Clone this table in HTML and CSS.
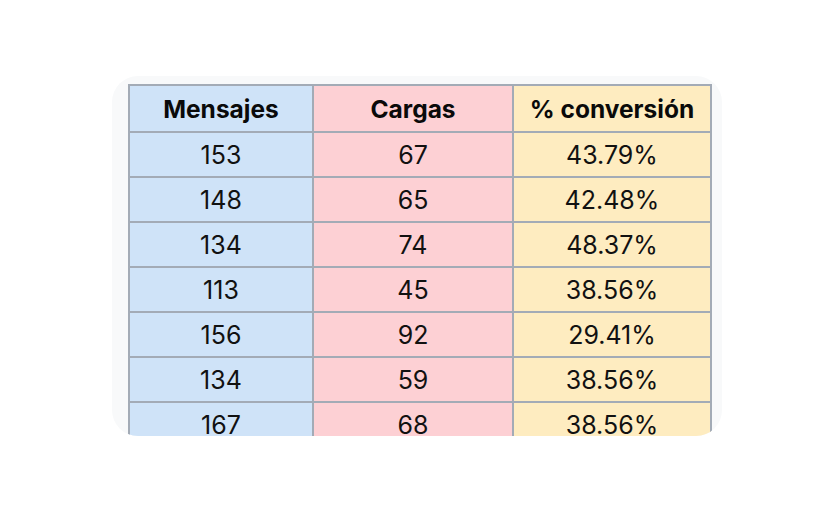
FILE: index.html
```html
<!DOCTYPE html>
<html lang="es">
<head>
<meta charset="utf-8">
<link rel="stylesheet" href="styles.css">
</head>
<body>
<div class="card">
  <table class="data">
    <colgroup>
      <col class="c1"><col class="c2"><col class="c3">
    </colgroup>
    <thead>
      <tr><th class="blue">Mensajes</th><th class="pink">Cargas</th><th class="yellow">% conversión</th></tr>
    </thead>
    <tbody>
      <tr><td class="blue">153</td><td class="pink">67</td><td class="yellow">43.79%</td></tr>
      <tr><td class="blue">148</td><td class="pink">65</td><td class="yellow">42.48%</td></tr>
      <tr><td class="blue">134</td><td class="pink">74</td><td class="yellow">48.37%</td></tr>
      <tr><td class="blue">113</td><td class="pink">45</td><td class="yellow">38.56%</td></tr>
      <tr><td class="blue">156</td><td class="pink">92</td><td class="yellow">29.41%</td></tr>
      <tr><td class="blue">134</td><td class="pink">59</td><td class="yellow">38.56%</td></tr>
      <tr><td class="blue">167</td><td class="pink">68</td><td class="yellow">38.56%</td></tr>
    </tbody>
  </table>
</div>
</body>
</html>
```
FILE: styles.css
```css
html, body {
  margin: 0;
  padding: 0;
  background: #ffffff;
}
body {
  font-family: "Inter", "Liberation Sans", sans-serif;
  color: #111111;
}
.card {
  margin: 76px 0 0 112px;
  width: 610px;
  height: 360px;
  box-sizing: border-box;
  padding: 8px 12px 0 16px;
  background: #f8f9fa;
  border-radius: 26px;
  overflow: hidden;
}
.data {
  border-collapse: collapse;
  table-layout: fixed;
  width: 582px;
}
.c1 { width: 184px; }
.c2 { width: 200px; }
.c3 { width: 198px; }
.data th, .data td {
  border: 2px solid #a3abb6;
  text-align: center;
  padding: 2px 0 0 0;
  line-height: 1;
}
.data th {
  height: 43px;
  font-size: 24.5px;
  font-weight: 700;
  color: #0a0a0a;
}
.data td {
  height: 41px;
  font-size: 25px;
  font-weight: 400;
}
.blue { background: #cfe3f8; }
.pink { background: #fdd0d4; }
.yellow { background: #feecc0; }
```
